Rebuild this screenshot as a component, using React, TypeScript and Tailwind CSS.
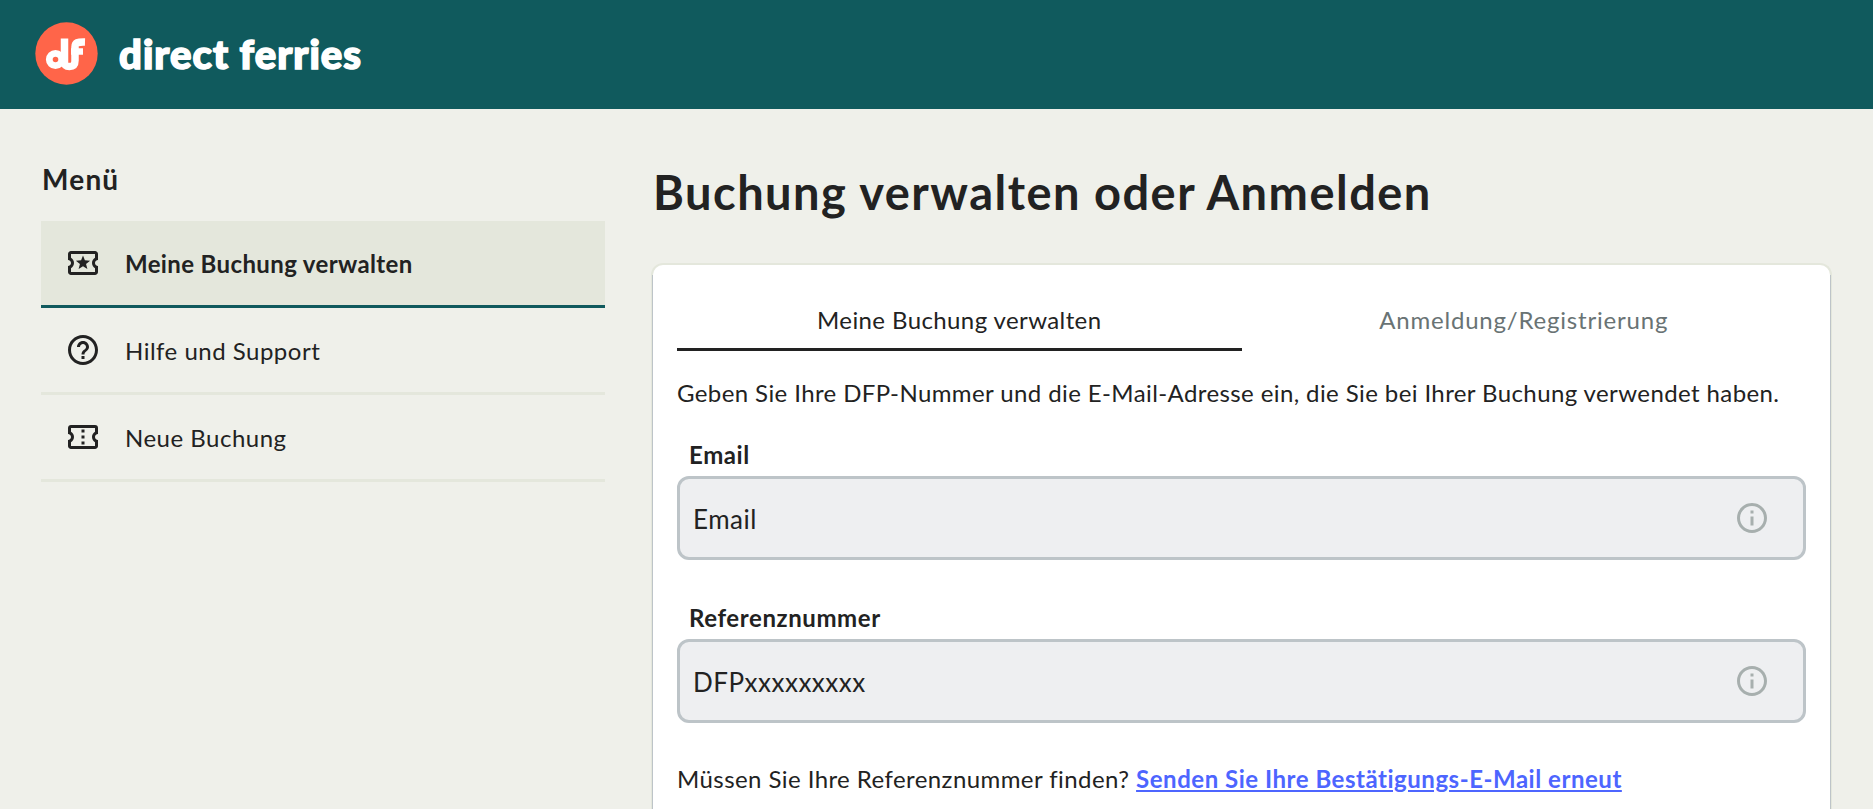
import React, { useState } from "react";
import {
  MdOutlineLocalActivity,
  MdHelpOutline,
  MdOutlineConfirmationNumber,
  MdInfoOutline,
} from "react-icons/md";

const menu = [
  { label: "Meine Buchung verwalten", Icon: MdOutlineLocalActivity },
  { label: "Hilfe und Support", Icon: MdHelpOutline },
  { label: "Neue Buchung", Icon: MdOutlineConfirmationNumber },
];

function Logo() {
  return (
    <a href="#" className="flex items-center" aria-label="direct ferries">
      <svg width="63" height="63" viewBox="0 0 63 63" fill="none">
        <circle cx="31.5" cy="31.5" r="31.2" fill="#ff6549" />
        <g stroke="#fff" strokeWidth="7.5" strokeLinejoin="round">
          <circle cx="20.5" cy="37.5" r="6.2" strokeWidth="6.8" />
          <path d="M29.500 16.500v23.500c0 3.800 1.500 4.400 5 4.400 4 0 5.500-2 5.500-5.900V25c0-4.500 2.500-5.200 10-5" />
          <path d="M36 29.500h12" strokeWidth="6.5" />
        </g>
      </svg>
      <span className="ml-[21px] pt-0.5 text-[40px] leading-[44px] font-black tracking-[1.05px] whitespace-nowrap text-white [-webkit-text-stroke:1.6px_#fff]">
        direct ferries
      </span>
    </a>
  );
}

function Field({ id, label, type = "text", placeholder }: { id: string; label: string; type?: string; placeholder: string }) {
  return (
    <div className="flex flex-col">
      <label htmlFor={id} className="ml-3 h-[38px] pt-px text-[24px] leading-8 font-bold tracking-[0.6px]">
        {label}
      </label>
      <div className="flex h-[84px] items-center rounded-xl border-3 border-[#bdc4c8] bg-[#eeeff1] pr-[33px] pl-[13px]">
        <input
          id={id}
          type={type}
          placeholder={placeholder}
          className="min-w-0 flex-1 bg-transparent pt-0.5 text-[26px] tracking-[0.5px] outline-none placeholder:text-[#222222]"
        />
        <MdInfoOutline className="size-9 text-[#a7afae]" />
      </div>
    </div>
  );
}

export default function App() {
  const [tab, setTab] = useState<number>(0);
  const tabs = ["Meine Buchung verwalten", "Anmeldung/Registrierung"];

  return (
    <div className="h-[809px] overflow-hidden bg-[#eff0ea] font-[Lato,sans-serif] text-[#222222]">
      <header className="flex h-[109px] items-center bg-[#105a5d] pb-[3px] pl-[35px]">
        <Logo />
      </header>

      <div className="flex">
        <aside className="ml-[41px] w-[564px] shrink-0 pt-[49px]">
          <h2 className="h-[63px] pl-px text-[28px] leading-[42px] font-bold tracking-[1.2px]">Menü</h2>
          <nav className="flex flex-col">
            {menu.map(({ label, Icon }, i) => (
              <a
                key={label}
                href="#"
                className={
                  i === 0
                    ? "flex h-[87px] items-center border-b-3 border-[#105a5d] bg-[#e4e7dc] pl-6 font-bold tracking-[0.37px]"
                    : "flex h-[87px] items-center border-b-3 border-[#e4e7dc] pl-6 tracking-[0.5px]"
                }
              >
                <Icon className="size-9" />
                <span className="ml-6 pt-0.5 text-[24px]">{label}</span>
              </a>
            ))}
          </nav>
        </aside>

        <main className="ml-[46px] w-[1181px] shrink-0 pt-[53px]">
          <h1 className="h-[101px] pl-[2px] text-[47px] leading-[60px] font-bold tracking-[1.48px]">
            Buchung verwalten oder Anmelden
          </h1>
          <section className="h-[700px] rounded-t-xl border-x-2 border-t-2 border-[#e4e7dc] bg-white pt-[10px]">
            {/* thin grey edge starts below the rounded corners */}
            <div className="-mx-px h-[690px] border-x border-[#bdc4c8] px-6 pt-[15px]">
              <div className="flex">
                {tabs.map((t, i) => (
                  <button
                    key={t}
                    type="button"
                    onClick={() => setTab(i)}
                    className={
                      tab === i
                        ? "h-[61px] flex-1 border-b-3 border-[#222222] pt-px text-[24px] tracking-[0.4px]"
                        : "h-[61px] flex-1 border-b-3 border-transparent pt-0.5 text-[24px] tracking-[0.8px] text-[#697374]"
                    }
                  >
                    {t}
                  </button>
                ))}
              </div>
              <p className="mt-6 h-[63px] text-[24px] leading-9 tracking-[0.4px] whitespace-nowrap">
                Geben Sie Ihre DFP-Nummer und die E-Mail-Adresse ein, die Sie bei Ihrer Buchung verwendet haben.
              </p>
              <form className="flex flex-col gap-[41px]">
                <Field id="email" label="Email" type="email" placeholder="Email" />
                <Field id="reference" label="Referenznummer" placeholder="DFPxxxxxxxxx" />
              </form>
              <p className="mt-[38px] text-[24px] leading-9 tracking-[0.43px] whitespace-nowrap">
                Müssen Sie Ihre Referenznummer finden?{" "}
                <a href="#" className="font-bold tracking-[0.53px] text-[#4d65ff] underline">
                  Senden Sie Ihre Bestätigungs-E-Mail erneut
                </a>
              </p>
            </div>
          </section>
        </main>
      </div>
    </div>
  );
}
